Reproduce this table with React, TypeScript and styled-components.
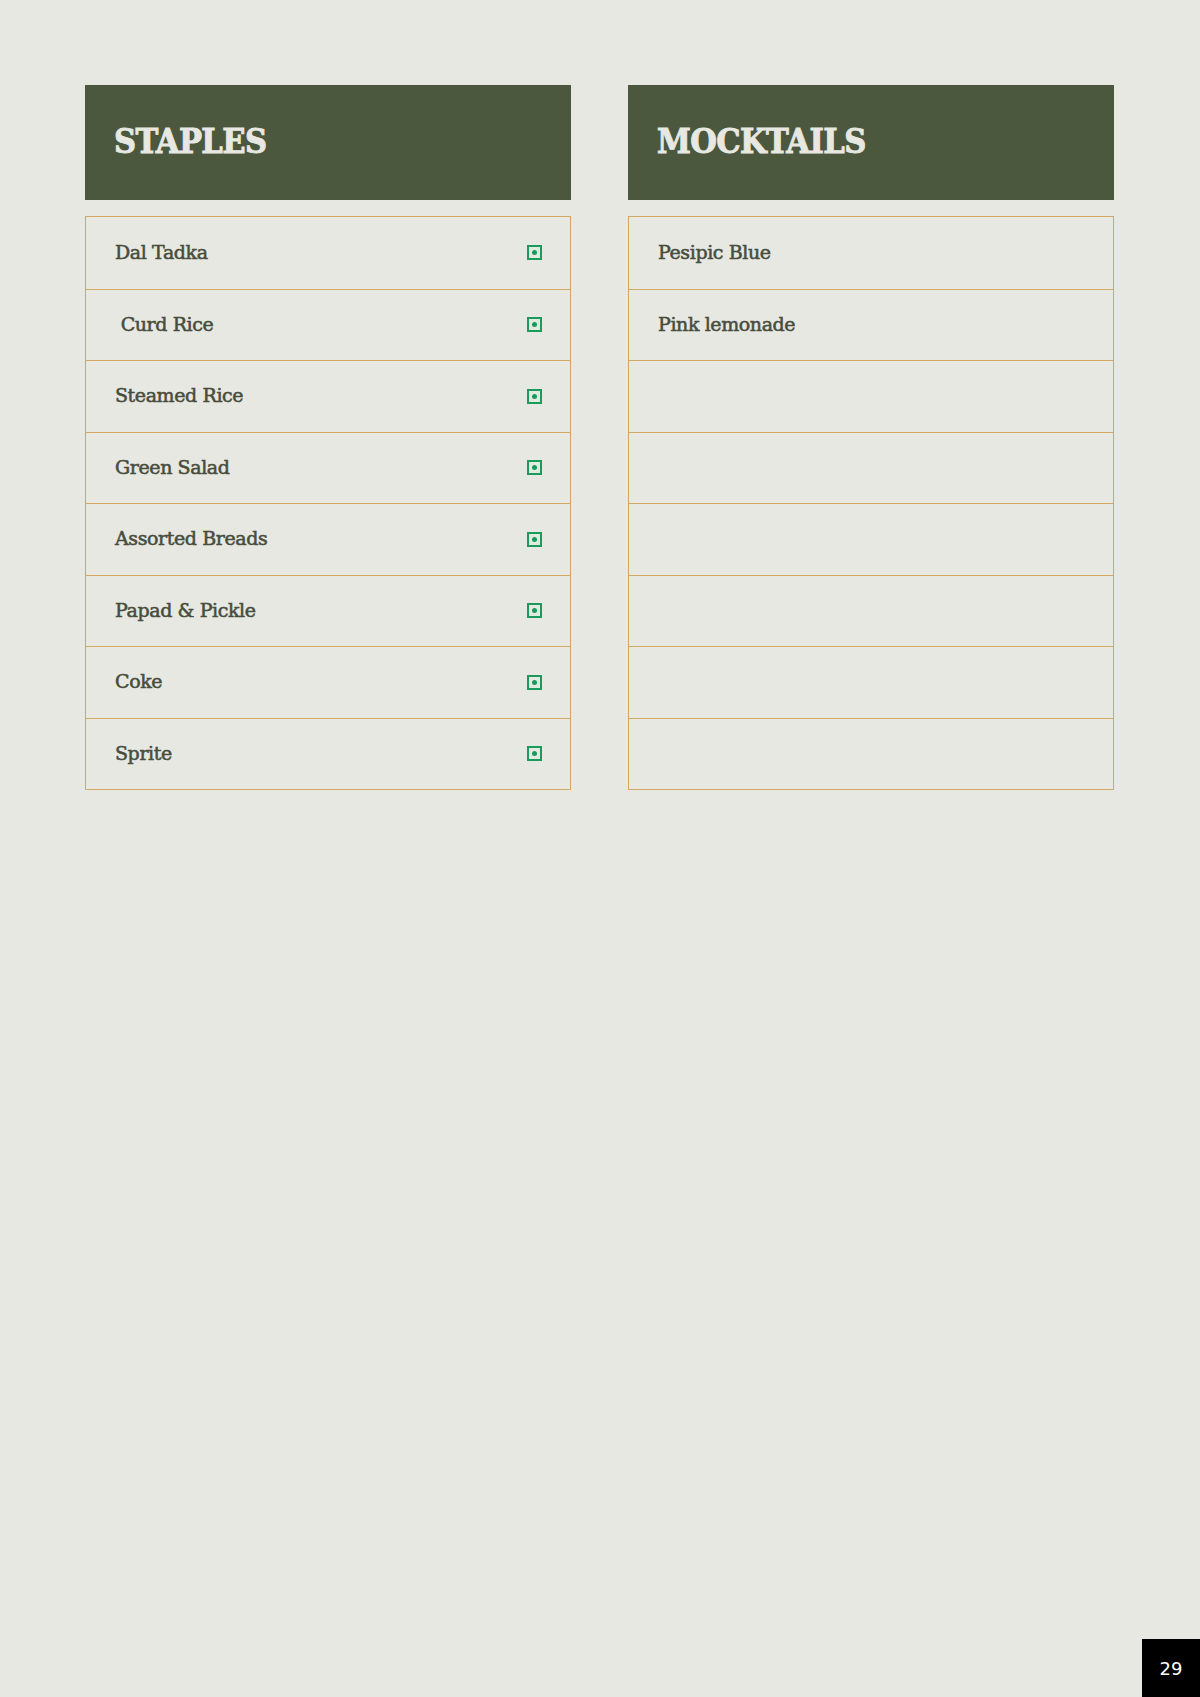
import React from 'react';
import styled, { createGlobalStyle } from 'styled-components';

const GlobalStyle = createGlobalStyle`
  html, body {
    margin: 0;
    padding: 0;
    background: #e8e8e2;
  }
`;

const Page = styled.div`
  width: 1200px;
  height: 1697px;
  box-sizing: border-box;
  display: flex;
  flex-direction: column;
  background: #e8e8e2;
  padding-top: 85px;
`;

const Columns = styled.div`
  display: grid;
  grid-template-columns: 486px 486px;
  column-gap: 57px;
  padding-left: 85px;
`;

const Section = styled.section`
  display: flex;
  flex-direction: column;
  gap: 16px;
`;

const Header = styled.div`
  height: 115px;
  background: #4b583e;
  display: flex;
  align-items: center;
  padding-left: 29px;
  box-sizing: border-box;
`;

const Title = styled.h2`
  margin: 0;
  font-family: "DejaVu Serif Condensed", "DejaVu Serif", "Liberation Serif", serif;
  font-stretch: condensed;
  font-weight: 700;
  font-size: 34px;
  letter-spacing: -0.6px;
  -webkit-text-stroke: 0.9px #e8e8e2;
  color: #e8e8e2;
  line-height: 1;
  padding-bottom: 4px;
`;

const List = styled.div`
  border: 1px solid #d3a85e;
  display: flex;
  flex-direction: column;
`;

const Row = styled.div`
  height: 71.5px;
  box-sizing: border-box;
  display: flex;
  align-items: center;
  justify-content: space-between;
  padding: 0 28px 2px 29px;
  & + & {
    border-top: 1px solid #d3a85e;
  }
`;

const ItemName = styled.span`
  font-family: "DejaVu Serif", "Liberation Serif", serif;
  font-size: 19px;
  color: #474d3d;
  letter-spacing: -0.4px;
  -webkit-text-stroke: 0.55px #474d3d;
  white-space: pre;
`;

const VegMark = styled.span`
  width: 15px;
  height: 15px;
  box-sizing: border-box;
  border: 2px solid #1b9b5b;
  display: flex;
  align-items: center;
  justify-content: center;
  margin-top: 2px;
  &::after {
    content: '';
    width: 5px;
    height: 5px;
    border-radius: 50%;
    background: #1b9b5b;
  }
`;

const Footer = styled.div`
  margin-top: auto;
  display: flex;
  justify-content: flex-end;
`;

const PageNumber = styled.div`
  width: 58px;
  height: 58px;
  background: #000;
  color: #fff;
  font-family: "DejaVu Sans", "Liberation Sans", sans-serif;
  font-size: 18px;
  display: flex;
  align-items: center;
  justify-content: center;
`;

const staples = [
  'Dal Tadka',
  '\u00a0Curd Rice',
  'Steamed Rice',
  'Green Salad',
  'Assorted Breads',
  'Papad & Pickle',
  'Coke',
  'Sprite',
];

const mocktails = ['Pesipic Blue', 'Pink lemonade', '', '', '', '', '', ''];

const App: React.FC = () => {
  return (
    <>
      <GlobalStyle />
      <Page>
        <Columns>
          <Section>
            <Header>
              <Title>STAPLES</Title>
            </Header>
            <List>
              {staples.map((item, i) => (
                <Row key={i}>
                  <ItemName>{item}</ItemName>
                  <VegMark />
                </Row>
              ))}
            </List>
          </Section>
          <Section>
            <Header>
              <Title>MOCKTAILS</Title>
            </Header>
            <List>
              {mocktails.map((item, i) => (
                <Row key={i}>
                  <ItemName>{item}</ItemName>
                </Row>
              ))}
            </List>
          </Section>
        </Columns>
        <Footer>
          <PageNumber>29</PageNumber>
        </Footer>
      </Page>
    </>
  );
};

export default App;
